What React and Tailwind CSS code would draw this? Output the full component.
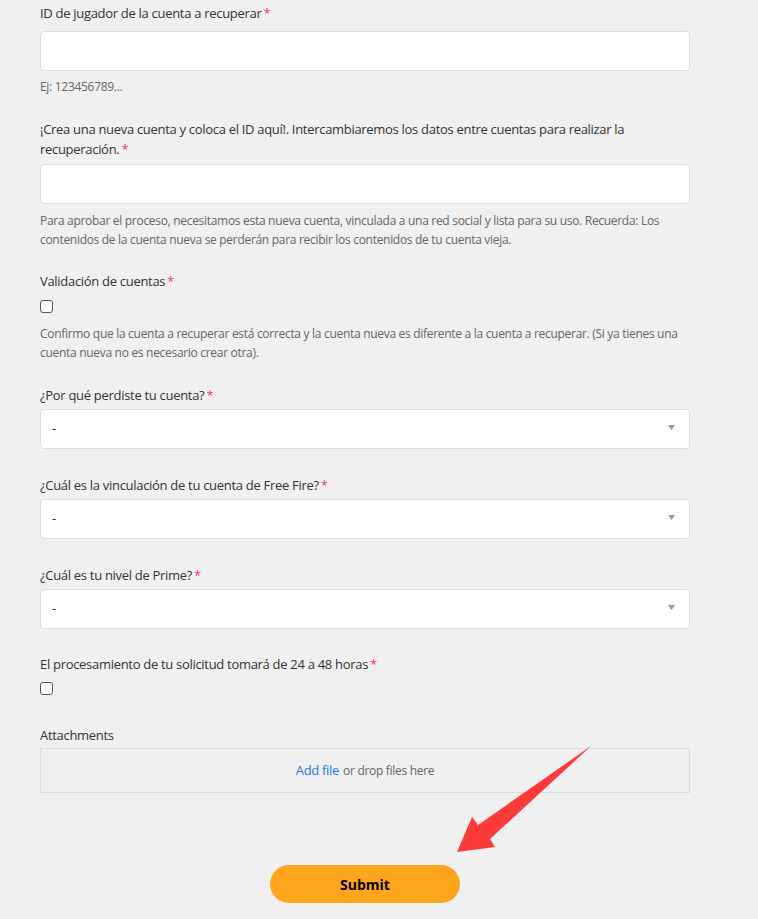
import React from 'react';

const FONT = {fontFamily: '"Open Sans", "Noto Sans", sans-serif'};

function Req() {
  return <span className="ml-[2px] text-[#f03c50]">*</span>;
}

function Label({children, className = ''}) {
  return (
    <label className={`block whitespace-nowrap text-[13px] leading-[20px] tracking-[-0.3px] text-[#333] ${className}`}>
      {children}
      <Req />
    </label>
  );
}

function Hint({children, className = ''}) {
  return (
    <p className={`whitespace-nowrap text-[12px] leading-[19px] tracking-[-0.3px] text-[#666] ${className}`}>
      {children}
    </p>
  );
}

function TextInput({className = 'mt-[4px]'}) {
  return (
    <input
      type="text"
      className={`block h-[40px] w-full rounded-[4px] border border-[#ddd] bg-white px-3 outline-none ${className}`}
    />
  );
}

function Select() {
  return (
    <div className="mt-[4px] flex h-[40px] w-full items-center justify-between rounded-[4px] border border-[#ddd] bg-white pl-[11px] pr-[14px]">
      <span className="text-[13px] text-[#333]">-</span>
      <svg width="7" height="5" viewBox="0 0 7 5" className="mb-[4px]">
        <path d="M0 0h7L3.5 5z" fill="#9a9a9a" />
      </svg>
    </div>
  );
}

function Checkbox({className = ''}) {
  return (
    <div className={`h-[13px] w-[13px] rounded-[3px] border border-[#555] bg-white ${className}`} />
  );
}

export default function App() {
  return (
    <div className="relative min-h-[919px] w-full bg-[#eff0ef]" style={FONT}>
      <form className="ml-[40px] w-[650px] pt-[3px]">
        {/* ID */}
        <div>
          <Label>ID de jugador de la cuenta a recuperar</Label>
          <TextInput className="mt-[8px]" />
          <Hint className="mt-[6px]">Ej: 123456789...</Hint>
        </div>

        {/* Nueva cuenta */}
        <div className="mt-[23px]">
          <Label>
            ¡Crea una nueva cuenta y coloca el ID aquí!. Intercambiaremos los datos entre cuentas para realizar la
            <br />
            recuperación.
          </Label>
          <TextInput className="mt-[5px]" />
          <Hint className="mt-[7px]">
            Para aprobar el proceso, necesitamos esta nueva cuenta, vinculada a una red social y lista para su uso. Recuerda: Los
            <br />
            contenidos de la cuenta nueva se perderán para recibir los contenidos de tu cuenta vieja.
          </Hint>
        </div>

        {/* Validación */}
        <div className="mt-[22px]">
          <Label>Validación de cuentas</Label>
          <Checkbox className="mt-[9px]" />
          <Hint className="mt-[11px]">
            Confirmo que la cuenta a recuperar está correcta y la cuenta nueva es diferente a la cuenta a recuperar. (Si ya tienes una
            <br />
            cuenta nueva no es necesario crear otra).
          </Hint>
        </div>

        <div className="mt-[23px]">
          <Label>¿Por qué perdiste tu cuenta?</Label>
          <Select />
        </div>

        <div className="mt-[26px]">
          <Label>¿Cuál es la vinculación de tu cuenta de Free Fire?</Label>
          <Select />
        </div>

        <div className="mt-[26px]">
          <Label>¿Cuál es tu nivel de Prime?</Label>
          <Select />
        </div>

        <div className="mt-[25px]">
          <Label>El procesamiento de tu solicitud tomará de 24 a 48 horas</Label>
          <Checkbox className="mt-[8px]" />
        </div>

        {/* Attachments */}
        <div className="mt-[30px]">
          <label className="block text-[13px] leading-[20px] tracking-[-0.3px] text-[#333]">Attachments</label>
          <div className="mt-[3px] flex h-[45px] items-center justify-center border border-[#ddd] text-[12px] tracking-[-0.3px] text-[#666]">
            <a className="mr-[4px] text-[13px] text-[#1e7ae8]">Add file</a>
            or drop files here
          </div>
        </div>

        <div className="mt-[72px] flex justify-center pb-[16px]">
          <button
            type="button"
            className="h-[38px] w-[190px] rounded-full bg-[#ffa51d] text-[14px] font-bold text-black"
          >
            Submit
          </button>
        </div>
      </form>

      {/* annotation arrow */}
      <svg className="pointer-events-none absolute left-0 top-0" width="758" height="919">
        <polygon
          points="591,746 490,839 495,847 457,852 472,817 478,825"
          fill="#fd3a3a"
        />
      </svg>
    </div>
  );
}
